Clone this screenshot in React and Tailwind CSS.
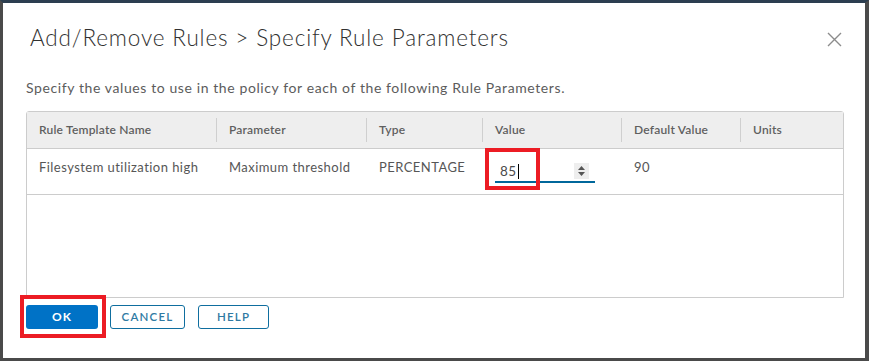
import React from 'react';

const columns = [
  { name: 'Rule Template Name', width: 'w-[189px]' },
  { name: 'Parameter', width: 'w-[150px]' },
  { name: 'Type', width: 'w-[116px]' },
  { name: 'Value', width: 'w-[139px]' },
  { name: 'Default Value', width: 'w-[119px]' },
  { name: 'Units', width: 'flex-1' },
];

function Spinner() {
  return (
    <span className="flex h-[16px] w-[15px] flex-col items-center justify-center gap-[2px] bg-[#eeeeee]">
      <svg width="7" height="4" viewBox="0 0 7 4"><path d="M0 4 L3.5 0 L7 4 Z" fill="#555" /></svg>
      <svg width="7" height="4" viewBox="0 0 7 4"><path d="M0 0 L3.5 4 L7 0 Z" fill="#555" /></svg>
    </span>
  );
}

function App() {
  return (
    <div className="h-[361px] w-[869px] overflow-hidden border-t-[3px] border-r-[4px] border-b-[3px] border-l-[3px] border-t-[#2c3e50] border-r-[#4a4a4a] border-b-[#4a4a4a] border-l-[#4a4a4a] bg-white font-['Lato','Open_Sans',sans-serif] text-[#565656]">
      <div className="relative flex h-full flex-col pl-[23px] pr-[21px]">
        {/* header */}
        <div className="flex items-center justify-between pt-[20px]">
          <h1 className="ml-[4px] text-[22.5px] font-light leading-[30px] tracking-[0.85px] text-[#313131]">
            Add/Remove Rules &gt; Specify Rule Parameters
          </h1>
          <button className="mr-[2px] mt-[2px] text-[#8c8c8c]">
            <svg width="15" height="15" viewBox="0 0 15 15">
              <path d="M1 1 L14 14 M14 1 L1 14" stroke="currentColor" strokeWidth="1.4" />
            </svg>
          </button>
        </div>

        <p className="mt-[26px] text-[14px] leading-[18px] tracking-[0.6px] text-[#5c5c5c]">
          Specify the values to use in the policy for each of the following Rule Parameters.
        </p>

        {/* table */}
        <div className="mt-[14px] flex h-[187px] flex-col rounded-t-[3px] border border-[#cccccc]">
          <div className="flex h-[36px] items-center bg-[#eeeeee]">
            {columns.map((c, i) => (
              <div key={c.name} className={`${c.width} flex h-[24px] items-center ${i > 0 ? 'border-l border-[#cfcfcf]' : ''} pl-[12px] text-[12px] font-semibold tracking-[0.2px] text-[#5f5f5f]`}>
                {c.name}
              </div>
            ))}
          </div>
          <div className="flex h-[47px] border-t border-b border-[#cccccc] text-[13px] tracking-[0.45px]">
            <div className="w-[189px] pl-[12px] pt-[9px]">Filesystem utilization high</div>
            <div className="w-[150px] pl-[13px] pt-[9px]">Maximum threshold</div>
            <div className="w-[116px] pl-[13px] pt-[9px]">PERCENTAGE</div>
            <div className="w-[139px] pl-[13px] pt-[12px]">
              <div className="flex h-[22px] w-[100px] items-center justify-between border-b-2 border-[#00679b] pl-[5px] pr-[6px]">
                <span className="flex items-center text-[13.5px] text-[#4a4a4a]">
                  85<span className="ml-[1px] h-[15px] w-[1px] bg-black" />
                </span>
                <Spinner />
              </div>
            </div>
            <div className="w-[119px] pl-[13px] pt-[9px]">90</div>
            <div className="flex-1" />
          </div>
          <div className="flex-1" />
        </div>

        {/* buttons */}
        <div className="mt-[7px] flex gap-[12px]">
          <button className="h-[24px] w-[72px] rounded-[3px] bg-[#0072c6] text-[12px] font-bold tracking-[1px] text-white">OK</button>
          <button className="h-[24px] w-[75px] rounded-[3px] border border-[#0f6e9f] text-[11.5px] font-semibold tracking-[1.2px] text-[#2f7aa3]">CANCEL</button>
          <button className="ml-[1px] h-[24px] w-[71px] rounded-[3px] border border-[#0f6e9f] text-[11.5px] font-semibold tracking-[1.2px] text-[#2f7aa3]">HELP</button>
        </div>

        {/* annotation boxes */}
        <div className="absolute left-[482px] top-[145px] h-[42px] w-[55px] border-[4px] border-[#ec1c24]" />
        <div className="absolute left-[17px] top-[292px] h-[43px] w-[86px] border-[4px] border-[#ec1c24]" />
      </div>
    </div>
  );
}

export default App;
